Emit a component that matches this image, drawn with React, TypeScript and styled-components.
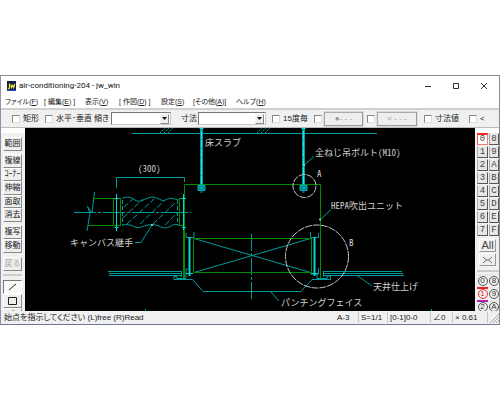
import React from 'react';
import styled, { createGlobalStyle, css } from 'styled-components';

const jp = '"Liberation Sans", "Noto Sans CJK JP", sans-serif';

const GlobalStyle = createGlobalStyle`
  *, *::before, *::after { box-sizing: border-box; }
  body { margin: 0; background: #fff; color: #222; font-family: ${jp}; font-size: 8px; line-height: 10px; }
  button, input, select { font: inherit; color: inherit; margin: 0; padding: 0; }
`;

const Page = styled.div`
  padding-top: 75px;
`;

const Window = styled.main`
  border: 1px solid #8a8a8a;
  border-color: #8a8a8a #8a8a8a #6f7890 #8c94b4;
  background: #f0f0f0;
`;

const TitleBar = styled.header`
  display: flex;
  align-items: center;
  height: 19px;
  padding: 0 11px 0 6px;
  background: #fff;
`;

const Title = styled.h1`
  flex: 1;
  margin: 0 0 0 3px;
  font: 400 8px/12px Roboto, sans-serif;
  color: #111;
`;

const WindowButtons = styled.div`
  display: flex;
  gap: 20px;
`;

const WindowButton = styled.button`
  display: flex;
  width: 8px;
  height: 10px;
  align-items: center;
  justify-content: center;
  border: 0;
  background: none;
`;

const MenuBar = styled.nav`
  display: flex;
  height: 13px;
  padding-left: 4px;
  background: #fff;
  font-size: 7px;
  line-height: 12px;
  font-feature-settings: "palt";
`;

const MenuItem = styled.button<{ $width: number }>`
  width: ${p => p.$width}px;
  border: 0;
  background: none;
  text-align: left;
  white-space: nowrap;
`;

const ToolBar = styled.form`
  display: flex;
  align-items: center;
  height: 20px;
  padding-left: 11px;
  overflow: hidden;
  border-top: 2px solid #d0d0d0;
  border-bottom: 1px solid #bbb;
  font-feature-settings: "palt";
  white-space: nowrap;
`;

const CheckLabel = styled.label<{ $width: number }>`
  display: flex;
  flex: none;
  align-items: center;
  gap: 3px;
  width: ${p => p.$width}px;
`;

const Spacer = styled.span<{ $width: number }>`
  flex: none;
  width: ${p => p.$width}px;
`;

const Check = styled.input.attrs({ type: 'checkbox' })`
  appearance: none;
  flex: none;
  width: 8px;
  height: 8px;
  border: 1px solid;
  border-color: #888 #ddd #ddd #888;
  background: #fff;
`;

const Field = styled.label<{ $width: number }>`
  display: flex;
  flex: none;
  align-items: center;
  justify-content: space-between;
  width: ${p => p.$width}px;
`;

const ComboBox = styled.span<{ $width: number }>`
  display: flex;
  align-items: center;
  width: ${p => p.$width}px;
  height: 13px;
  padding: 1px;
  border: 1px solid;
  border-color: #777 #ccc #ccc #777;
  background: #fff;
`;

const Combo = styled.select`
  appearance: none;
  flex: 1;
  min-width: 0;
  height: 9px;
  border: 0;
  background: #fff;
`;

const ComboArrow = styled.span`
  display: flex;
  align-items: center;
  justify-content: center;
  width: 9px;
  height: 10px;
  border: 1px solid;
  border-color: #f4f4f4 #888 #888 #f4f4f4;
  background: #eee;
`;

const sunken = css`
  border: 1px solid;
  border-color: #aaa #999 #999 #aaa;
  box-shadow: 0 0 0 1px #ddd;
`;

const StyleButton = styled.button<{ $width: number }>`
  ${sunken}
  flex: none;
  width: ${p => p.$width}px;
  height: 14px;
  background: #eee;
  color: #999;
  line-height: 11px;
`;

const Workspace = styled.div`
  display: grid;
  grid-template-columns: 24px minmax(0, 1fr) 24px;
`;

const SideBar = styled.aside`
  display: flex;
  flex-direction: column;
  min-height: 0;
  overflow: hidden;
  contain: size;
`;

const LeftBar = styled(SideBar)`
  padding: 0 3px 0 2px;
  border-top: 5px solid #fff;
`;

const ToolGroup = styled.div<{ $height: number; $top: number }>`
  display: flex;
  flex: none;
  flex-direction: column;
  height: ${p => p.$height}px;
  margin-top: ${p => p.$top}px;
`;

const Tool = styled.button<{ $active?: boolean }>`
  display: flex;
  flex: 1;
  min-height: 0;
  align-items: center;
  justify-content: center;
  border: 1px solid;
  border-color: ${p => (p.$active ? '#777 #fff #fff #777' : '#fff #888 #888 #fff')};
  background: ${p => (p.$active ? '#f8f8f8' : '#eee')};
  line-height: 10px;
  white-space: nowrap;
  &:disabled { color: #aaa; }
`;

const Rule = styled.hr`
  flex: none;
  width: 100%;
  height: 2px;
  margin: 3px 0 0;
  border: 0;
  background: #ccc;
`;

const RightBar = styled(SideBar)`
  padding: 0 0 0 2px;
  border-top: 5px solid #fff;
`;

const LayerGrid = styled.div<{ $top: number }>`
  display: grid;
  flex: none;
  grid-template-columns: 11px 10px;
  grid-auto-rows: 12px;
  gap: 1px;
  margin-top: ${p => p.$top}px;
`;

const Layer = styled.button<{ $current?: boolean }>`
  border: 1px solid;
  border-color: ${p => (p.$current ? '#f22 #e77 #e77 #e55' : '#eee #555 #555 #aaa')};
  border-top-width: ${p => (p.$current ? 2 : 1)}px;
  background: ${p => (p.$current ? '#fff' : '#e6e6e6')};
  color: #444;
  font-family: "Liberation Mono", monospace;
  font-size: 9px;
  line-height: 9px;
`;

const Group = styled.button<{ $mark?: string }>`
  display: flex;
  align-items: center;
  justify-content: center;
  border: 0;
  border-top: 2px solid ${p => p.$mark || '#e8e8e8'};
  background: #eee;
`;

const Ring = styled.span<{ $red?: boolean }>`
  width: 10px;
  height: 10px;
  border: 1px solid ${p => (p.$red ? '#e33' : '#555')};
  border-radius: 50%;
  color: ${p => (p.$red ? '#c33' : '#333')};
  font-size: 8px;
  line-height: 8px;
  text-align: center;
`;

const WideButton = styled.button`
  display: flex;
  flex: none;
  align-items: center;
  justify-content: center;
  width: 17px;
  height: 13px;
  margin: 0 0 1px 2px;
  border: 1px solid;
  border-color: #fff #999 #999 #fff;
  background: #eee;
  color: #444;
  font-size: 11px;
  line-height: 11px;
`;

const Drawing = styled.svg`
  display: block;
  width: 100%;
  height: auto;
  background: #000;
`;

const Note = styled.text`
  fill: #d0d0d0;
  font-family: "Noto Sans CJK JP", sans-serif;
  font-feature-settings: "hwid";
  font-size: 9px;
`;

const StatusBar = styled.footer`
  display: flex;
  height: 13px;
  padding: 1px 0 1px 3px;
  background: #f0f0f0;
  line-height: 11px;
  white-space: nowrap;
`;

const Message = styled.span`
  flex: 1;
  font-feature-settings: "palt";
`;

const Status = styled.span<{ $width: number }>`
  width: ${p => p.$width}px;
  padding-left: 2px;
  border-right: 1px solid #c8c8c8;
`;

const menus: [string, string, string, number][] = [
  ['ファイル(', 'F', ')', 39],
  ['[ 編集(', 'E', ') ]', 41],
  ['表示(', 'V', ')', 34],
  ['[ 作図(', 'D', ') ]', 42],
  ['設定(', 'S', ')', 32],
  ['[その他(', 'A', ')]', 43],
  ['ヘルプ(', 'H', ')', 40],
];

const layers = ['0', '8', '1', '9', '2', 'A', '3', 'B', '4', 'C', '5', 'D', '6', 'E', '7', 'F'];
const groups = ['0', '8', '1', '9', '2', 'A'];

function ComboField({ label, width, boxWidth }: { label: string; width: number; boxWidth: number }) {
  return (
    <Field $width={width}>
      {label}
      <ComboBox $width={boxWidth}>
        <Combo aria-label={label}><option /></Combo>
        <ComboArrow><svg width="5" height="3"><path d="M0 0h5L2.5 3z" fill="#111" /></svg></ComboArrow>
      </ComboBox>
    </Field>
  );
}

function Hatch({ x }: { x: number }) {
  return <path d={`M${x} 133l5-5M${x + 4} 133l5-5M${x + 8} 133l5-5`} stroke="#00a8a8" strokeDasharray="2 1" />;
}

function Rod({ x }: { x: number }) {
  return (
    <g>
      <path d={`M${x} 128v58`} stroke="#009c9c" strokeWidth="3" />
      <path d={`M${x} 131v54`} stroke="#20e8e8" strokeDasharray="8 1" />
      <path d={`M${x - 3.5} 185.500h7v5h-7z`} fill="#007c7c" stroke="#00b4b4" />
      <path d={`M${x - 2} 128.500h4M${x - 2} 188h4M${x - 1} 192h2`} stroke="#00e0e0" />
    </g>
  );
}

function CadDrawing() {
  return (
    <Drawing viewBox="25 128 450 183" role="img" aria-label="air-conditioning-204" fill="none">
      <g stroke="#009c9c">
        <path d="M132 133.5H377" />
        <Hatch x={160} /><Hatch x={257} />
        <path d="M116.5 188V177.5H184.5V182" />
        <path d="M74 212.5H191" strokeDasharray="22 2 3 2" />
        <path d="M94.5 192L92 213L87.500 206.500L90 213L87 231" />
        <path d="M122 198.500C127 196 131 197 135 200S143 200 148 198S157 198 161 200S168 197 173 198.500S178 200 179 199" />
        <path d="M122 225C127 224 132 225 135 227S143 226 148 225S157 225 161 227S170 227 173 225S178 226 179 225" />
        <path d="M122.500 200V225M177.500 200V225" strokeDasharray="4 2" />
        <path d="M124 207l9-8M123 218l20-19M127 224l27-25M140 224l24-23M153 224l22-21M165 225l13-13" strokeDasharray="6 2" />
        <path d="M152 225L141 242.500H135" />
        <path d="M108 271.500H181M109 273.500H181M109 275.500H181M181.500 271V277M323 271.500H402M324 273.500H403M323 275.500H404M323.500 271V277" />
        <path d="M174.500 276.500H177V278.500H186M174 276V279.500H192.500L203 291.500H301L312 279.500H330.500V276H327V278.500H317V274" />
        <path d="M186 233V237.500H194V232M186 278V269H188M310.500 232V237.500H318.500V233M318.500 268V274H310" />
        <path d="M194 238.500L310.500 272.500M194 272.500L310.500 238.500" />
        <path d="M251.500 234V300" strokeDasharray="17 2 3 2" />
        <path d="M270 291L279 301M357 275.500L372 286M304 165L314 156.500M320 220L331 209.500M145.500 309V311M431.500 309V311" />
      </g>
      <g stroke="#008c00">
        <path d="M184.500 278V184.500H320.500V278M93 198.500H121M88 225.500H121M113.500 198V226M120.500 198V226M179 198.500H184M179 225.500H184M179.500 198V226" />
        <path d="M193.500 238.500H311.500V272.500H193.500zM183.500 226V278M193.500 240V271M311.500 240V271" />
      </g>
      <Rod x={201.5} /><Rod x={303.5} />
      <g stroke="#00d8d8">
        <path d="M116.500 194V231M183.500 194V230M114.500 198.500h4M114.500 227.500h4M182 198.500h4M182 227.500h4" />
        <path d="M189.500 237V276M314.500 237V276" strokeWidth="2" />
        <path d="M186 273.500h7M311 273.500h7" />
      </g>
      <g stroke="#c4c4c4" strokeDasharray="7 1">
        <circle cx="304.5" cy="186" r="11.500" />
        <circle cx="317" cy="256.500" r="31.500" />
      </g>
      <g fill="#a0e0d0">
        <circle cx="152" cy="225" r="1" /><circle cx="304" cy="165" r="1" /><circle cx="320" cy="219.500" r="1" />
      </g>
      <Note x="205" y="146">床スラブ</Note>
      <Note x="138" y="172">(300)</Note>
      <Note x="315" y="156">全ねじ吊ボルト(M10)</Note>
      <Note x="317" y="177">A</Note>
      <Note x="331" y="209">HEPA吹出ユニット</Note>
      <Note x="349" y="246">B</Note>
      <Note x="70" y="246">キャンバス継手</Note>
      <Note x="373" y="290">天井仕上げ</Note>
      <Note x="281" y="306">パンチングフェイス</Note>
    </Drawing>
  );
}

export default function App() {
  return (
    <Page>
      <GlobalStyle />
      <Window>
        <TitleBar>
          <svg width="9" height="10" viewBox="0 0 9 10">
            <rect width="9" height="10" fill="#15204a" />
            <path d="M2.500 2.500v4.500L1 8M4 3.500l.5 3 1.200-2 1 2 1-3.500" stroke="#f2e93a" strokeWidth="1.200" fill="none" />
            <path d="M0 9.500h9" stroke="#234bd0" />
          </svg>
          <Title>air-conditioning-204 - jw_win</Title>
          <WindowButtons>
            <WindowButton aria-label="Minimize"><svg width="8" height="8"><path d="M1 4.500h6" stroke="#333" /></svg></WindowButton>
            <WindowButton aria-label="Maximize"><svg width="8" height="8"><path d="M1.500 1.500h5v5h-5z" stroke="#333" fill="none" /></svg></WindowButton>
            <WindowButton aria-label="Close"><svg width="8" height="8"><path d="M1 1l6 6M7 1l-6 6" stroke="#333" /></svg></WindowButton>
          </WindowButtons>
        </TitleBar>
        <MenuBar>
          {menus.map(([before, key, after, width]) => (
            <MenuItem key={key} $width={width}>{before}<u>{key}</u>{after}</MenuItem>
          ))}
        </MenuBar>
        <ToolBar>
          <CheckLabel $width={33}><Check />矩形</CheckLabel>
          <CheckLabel $width={49}><Check />水平･垂直</CheckLabel>
          <ComboField label="傾き" width={77} boxWidth={60} />
          <Spacer $width={10} />
          <ComboField label="寸法" width={85} boxWidth={68} />
          <Spacer $width={6} />
          <CheckLabel $width={42}><Check />15度毎</CheckLabel>
          <CheckLabel $width={10}><Check aria-label="点種" /></CheckLabel>
          <StyleButton type="button" $width={39}>●- - -</StyleButton>
          <Spacer $width={4} />
          <CheckLabel $width={10}><Check aria-label="矢印" /></CheckLabel>
          <StyleButton type="button" $width={40}>&lt; - - -</StyleButton>
          <Spacer $width={7} />
          <CheckLabel $width={45}><Check />寸法値</CheckLabel>
          <CheckLabel $width={20}><Check />&lt;</CheckLabel>
        </ToolBar>
        <Workspace>
          <LeftBar>
            <ToolGroup $height={14} $top={4}><Tool>範囲</Tool></ToolGroup>
            <ToolGroup $height={68} $top={3}>
              <Tool>複線</Tool><Tool>ｺｰﾅｰ</Tool><Tool>伸縮</Tool><Tool>面取</Tool><Tool>消去</Tool>
            </ToolGroup>
            <ToolGroup $height={28} $top={3}><Tool>複写</Tool><Tool>移動</Tool></ToolGroup>
            <ToolGroup $height={14} $top={4}><Tool disabled>戻る</Tool></ToolGroup>
            <Rule />
            <ToolGroup $height={42} $top={4}>
              <Tool $active aria-label="線"><svg width="10" height="8"><path d="M1 7L8 1" stroke="#222" /></svg></Tool>
              <Tool aria-label="矩形"><svg width="10" height="9"><path d="M.5.5h8v7h-8z" stroke="#222" fill="none" /></svg></Tool>
              <Tool aria-label="円弧"><svg width="10" height="10"><circle cx="5" cy="5" r="4" stroke="#222" fill="none" /></svg></Tool>
            </ToolGroup>
          </LeftBar>
          <CadDrawing />
          <RightBar>
            <LayerGrid $top={0}>
              {layers.map(l => <Layer key={l} $current={l === '0'}>{l}</Layer>)}
            </LayerGrid>
            <ToolGroup $height={28} $top={3}>
              <WideButton>All</WideButton>
              <WideButton aria-label="反転"><svg width="11" height="8"><path d="M1 1l3.500 3L1 7M10 1L6.500 4 10 7M4 4h3" stroke="#777" fill="none" /></svg></WideButton>
            </ToolGroup>
            <Rule />
            <LayerGrid $top={2}>
              {groups.map(g => (
                <Group key={g} $mark={g === '1' ? '#e22' : g === '2' ? '#b020b0' : undefined}>
                  <Ring $red={g === '1'}>{g}</Ring>
                </Group>
              ))}
            </LayerGrid>
          </RightBar>
        </Workspace>
        <StatusBar>
          <Message>始点を指示してください (L)free (R)Read</Message>
          <Status $width={24}>A-3</Status>
          <Status $width={29}>S=1/1</Status>
          <Status $width={43}>[0-1]0-0</Status>
          <Status $width={22}>∠0</Status>
          <Status $width={35}>× 0.61</Status>
          <svg width="11" height="11"><path d="M2 11l9-9M5 11l6-6M8 11l3-3" stroke="#aaa" /></svg>
        </StatusBar>
      </Window>
    </Page>
  );
}
